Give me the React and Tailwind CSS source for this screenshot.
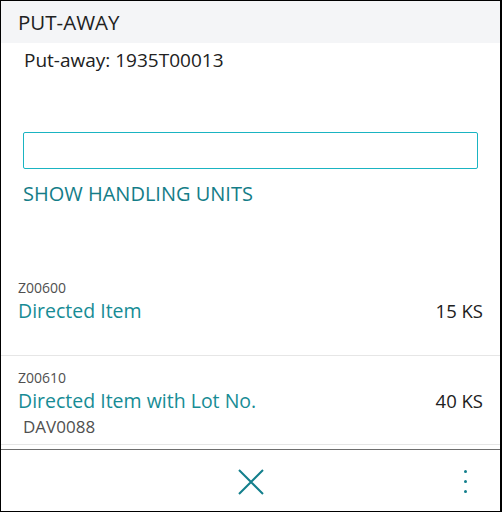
import React from "react"

const items = [
  { no: "Z00600", name: "Directed Item", qty: "15 KS" },
  { no: "Z00610", name: "Directed Item with Lot No.", qty: "40 KS", lot: "DAV0088" },
]

const App = () => {
  return (
    <div
      className="flex h-[512px] w-[502px] flex-col overflow-hidden border-y border-l border-r-2 border-black bg-white text-[#212121]"
      style={{ fontFamily: "'Open Sans', 'Noto Sans', sans-serif" }}
    >
      <div className="h-[42px] shrink-0 bg-[#f4f5f7] pl-[17px] pt-[8px] text-[20.5px] leading-[26px]">PUT-AWAY</div>

      <div className="px-[23px] pt-[4px] text-[19px] leading-[26px]">Put-away: 1935T00013</div>

      <div className="mx-[22px] mt-[59px] h-[37px] rounded-[2px] border border-[#1ab4c2]" />

      <button className="mx-[22px] mt-[12px] self-start text-[20px] leading-[26px] text-[#147d88]">
        SHOW HANDLING UNITS
      </button>

      <div className="mt-[71px]">
        {items.map((it) => (
          <div
            key={it.no}
            className={
              it.lot
                ? "border-b border-[#e6e6e6] px-[17px] pb-[5px] pt-[12px]"
                : "border-b border-[#e6e6e6] px-[17px] pb-[7px]"
            }
          >
            <div className="text-[14px] leading-[20px] text-[#505050]">{it.no}</div>
            <div className="flex items-baseline justify-between">
              <span className="text-[19.5px] leading-[26px] text-[#178c95]">{it.name}</span>
              <span className="text-[18.5px] leading-[26px]">{it.qty}</span>
            </div>
            {it.lot ? (
              <div className="pl-[5px] text-[17px] leading-[25px] text-[#505050]">{it.lot}</div>
            ) : (
              <div className="h-[24px]" />
            )}
          </div>
        ))}
      </div>

      <div className="flex-1" />

      <div className="relative flex h-[62px] shrink-0 items-center justify-center border-t border-[#6e6e6e] pt-[3px]">
        <svg width="28" height="28" viewBox="0 0 28 28" className="text-[#137f8c]">
          <path d="M2 2 L26 26 M26 2 L2 26" stroke="currentColor" strokeWidth="2" fill="none" />
        </svg>
        <div className="absolute right-[33px] top-[20px] flex flex-col gap-[7px]">
          <span className="block h-[3px] w-[3px] rounded-full bg-[#137f8c]" />
          <span className="block h-[3px] w-[3px] rounded-full bg-[#137f8c]" />
          <span className="block h-[3px] w-[3px] rounded-full bg-[#137f8c]" />
        </div>
      </div>
    </div>
  )
}

export default App
